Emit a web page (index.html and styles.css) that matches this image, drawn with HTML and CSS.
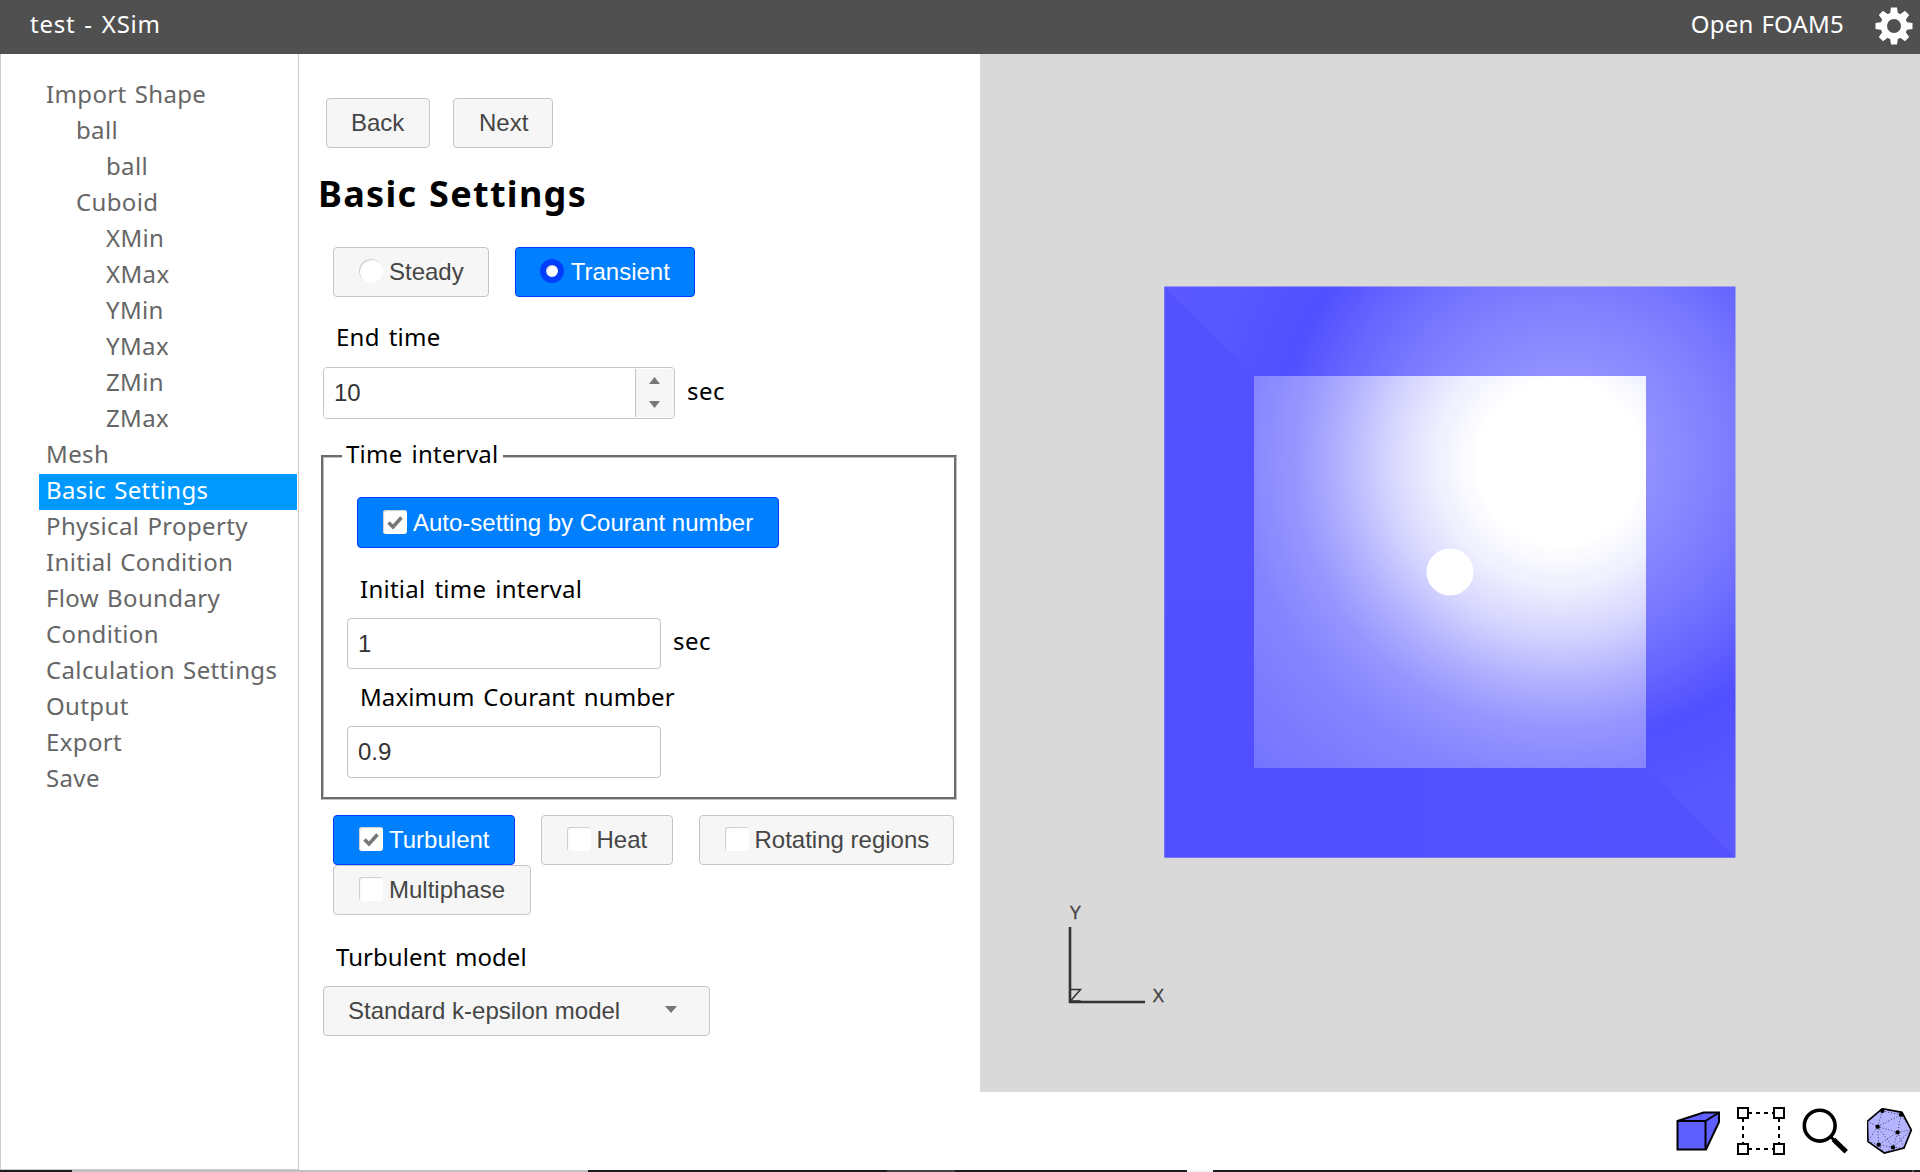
FILE: index.html
```html
<!DOCTYPE html>
<html lang="en">
<head>
<meta charset="utf-8">
<title>test - XSim</title>
<link rel="stylesheet" href="styles.css">
</head>
<body>
<header class="topbar">
  <span class="title">test - XSim</span>
  <span class="solver">Open FOAM5</span>
  <svg class="gear" viewBox="-19 -19 38 38" width="38" height="38">
    <g fill="#fff">
      <path d="M-3-18.5h6l1 7h-8z"/>
      <path d="M-3-18.5h6l1 7h-8z" transform="rotate(45)"/>
      <path d="M-3-18.5h6l1 7h-8z" transform="rotate(90)"/>
      <path d="M-3-18.5h6l1 7h-8z" transform="rotate(135)"/>
      <path d="M-3-18.5h6l1 7h-8z" transform="rotate(180)"/>
      <path d="M-3-18.5h6l1 7h-8z" transform="rotate(225)"/>
      <path d="M-3-18.5h6l1 7h-8z" transform="rotate(270)"/>
      <path d="M-3-18.5h6l1 7h-8z" transform="rotate(315)"/>
    </g>
    <circle r="10.2" fill="none" stroke="#fff" stroke-width="6.4"/>
  </svg>
</header>
<div class="workspace">
  <nav class="sidebar">
    <ul class="tree">
      <li>Import Shape</li>
      <li class="level-1">ball</li>
      <li class="level-2">ball</li>
      <li class="level-1">Cuboid</li>
      <li class="level-2">XMin</li>
      <li class="level-2">XMax</li>
      <li class="level-2">YMin</li>
      <li class="level-2">YMax</li>
      <li class="level-2">ZMin</li>
      <li class="level-2">ZMax</li>
      <li>Mesh</li>
      <li class="selected">Basic Settings</li>
      <li>Physical Property</li>
      <li>Initial Condition</li>
      <li>Flow Boundary</li>
      <li>Condition</li>
      <li>Calculation Settings</li>
      <li>Output</li>
      <li>Export</li>
      <li>Save</li>
    </ul>
  </nav>

  <main class="settings">
    <div class="steps">
      <button class="btn back">Back</button>
      <button class="btn next">Next</button>
    </div>
    <h1>Basic Settings</h1>
    <div class="choices time-mode">
      <button class="btn"><span class="radio"></span>Steady</button>
      <button class="btn active"><span class="radio on"></span>Transient</button>
    </div>

    <label class="caption end-time">End time</label>
    <div class="field">
      <div class="spinner">
        <input class="value" value="10">
        <div class="arrows">
          <svg width="11" height="7"><path d="M0 7L5.500 0 11 7z" fill="#777"/></svg>
          <svg width="11" height="7"><path d="M0 0h11L5.500 7z" fill="#777"/></svg>
        </div>
      </div>
      <span class="unit">sec</span>
    </div>

    <fieldset class="interval">
      <legend>Time interval</legend>
      <button class="btn active auto"><span class="check"><svg width="18" height="18"><path d="M2.500 9.500L7 14l8.500-9.500" fill="none" stroke="#777" stroke-width="3.600"/></svg></span>Auto-setting by Courant number</button>
      <label class="caption initial">Initial time interval</label>
      <div class="field">
        <input class="value box" value="1">
        <span class="unit">sec</span>
      </div>
      <label class="caption courant">Maximum Courant number</label>
      <div class="field">
        <input class="value box tall" value="0.9">
      </div>
    </fieldset>

    <div class="choices physics">
      <button class="btn active"><span class="check"><svg width="18" height="18"><path d="M2.500 9.500L7 14l8.500-9.500" fill="none" stroke="#777" stroke-width="3.600"/></svg></span>Turbulent</button>
      <button class="btn heat"><span class="check"></span>Heat</button>
      <button class="btn"><span class="check"></span>Rotating regions</button>
      <button class="btn multiphase"><span class="check"></span>Multiphase</button>
    </div>

    <label class="caption model">Turbulent model</label>
    <button class="btn select">Standard k-epsilon model
      <svg width="12" height="7"><path d="M0 0h12L6 7z" fill="#777"/></svg>
    </button>
  </main>

  <section class="viewer">
    <svg class="scene" width="940" height="1038" viewBox="980 54 940 1038">
      <defs>
        <radialGradient id="wall" gradientUnits="userSpaceOnUse" cx="1565" cy="455" r="490">
          <stop offset=".17" stop-color="#9291ff"/>
          <stop offset=".35" stop-color="#7c7bff"/>
          <stop offset=".48" stop-color="#6665ff"/>
          <stop offset=".59" stop-color="#514fff"/>
          <stop offset=".74" stop-color="#5957ff"/>
          <stop offset="1" stop-color="#5c5bff"/>
        </radialGradient>
        <radialGradient id="back" gradientUnits="userSpaceOnUse" cx="1560" cy="462" r="455">
          <stop offset=".18" stop-color="#fff"/>
          <stop offset=".27" stop-color="#f0f0ff"/>
          <stop offset=".38" stop-color="#d5d4ff"/>
          <stop offset=".49" stop-color="#b0afff"/>
          <stop offset=".58" stop-color="#9796ff"/>
          <stop offset=".7" stop-color="#8584ff"/>
          <stop offset="1" stop-color="#7170ff"/>
        </radialGradient>
        <linearGradient id="side" x1="0" y1="0" x2="0" y2="1">
          <stop offset="0" stop-color="#5452ff"/>
          <stop offset="1" stop-color="#504eff"/>
        </linearGradient>
        <linearGradient id="floor" x1="0" y1="0" x2="1" y2="0">
          <stop offset="0" stop-color="#504eff"/>
          <stop offset="1" stop-color="#5452ff"/>
        </linearGradient>
      </defs>
      <rect x="1164.500" y="286.500" width="571" height="571" fill="url(#wall)"/>
      <path d="M1164.500 286.500L1254 376V768l-89.500 89.500z" fill="url(#side)"/>
      <path d="M1164.500 857.500L1254 768H1646l89.500 89.500z" fill="url(#floor)"/>
      <rect x="1254" y="376" width="392" height="392" fill="url(#back)"/>
      <circle cx="1450" cy="572" r="23.500" fill="#fff"/>
      <path d="M1070 927v75h75" fill="none" stroke="#333" stroke-width="2.600"/>
      <path d="M1070.500 989.500h10l-10 11.500h10" fill="none" stroke="#333" stroke-width="1.500"/>
      <g class="axis">
        <text x="1069.500" y="919">Y</text>
        <text x="1152.500" y="1001.500">X</text>
      </g>
    </svg>
    <div class="tools">
      <svg class="cube" width="46" height="42" viewBox="1675 1110 46 42">
        <path d="M1677.500 1121l26-8.500h15.500v9.500l-13 27.500h-28.500z" fill="#5f5fff" stroke="#000" stroke-width="2"/>
        <path d="M1677.500 1121h28v28.500M1705.500 1121l13.500-8.500" fill="none" stroke="#000" stroke-width="2"/>
      </svg>
      <svg width="48" height="48" viewBox="1737 1107 48 48">
        <path d="M1748 1113h26M1748 1149h26M1743 1118v26M1779 1118v26" stroke="#000" stroke-width="2" stroke-dasharray="4 4" fill="none"/>
        <path d="M1738 1108h10v10h-10zM1774 1108h10v10h-10zM1738 1144h10v10h-10zM1774 1144h10v10h-10z" fill="#fff" stroke="#000" stroke-width="2"/>
      </svg>
      <svg width="46" height="46" viewBox="1802 1108 46 46">
        <circle cx="1819.700" cy="1125.700" r="15.400" fill="none" stroke="#000" stroke-width="3.600"/>
        <path d="M1831 1137l4 4" stroke="#000" stroke-width="3"/>
        <path d="M1833.500 1139.500l12.700 12.200" stroke="#000" stroke-width="5"/>
      </svg>
      <svg class="mesh" width="46" height="48" viewBox="620 84 138 144">
        <path d="M666 86l59 11 28 53-22 54-59 15-49-34-2-61z" fill="#b3b3ff" stroke="#000" stroke-width="5"/>
        <path d="M666 93l-14 47 3 54 43 8 14-45 10-53-70 36 60 17-57 37-32-10 29-44-31-16M652 140l46 62M712 157l41-7-55 52 33 2M655 194l17 25 26-17M712 157l19 47M666 93l56 11 31 46" fill="none" stroke="#223" stroke-width="2.500" stroke-dasharray="3 6"/>
        <g fill="#000"><circle cx="666" cy="93" r="6.500"/><circle cx="722" cy="104" r="6.500"/><circle cx="652" cy="140" r="6.500"/><circle cx="712" cy="157" r="6.500"/><circle cx="655" cy="194" r="6.500"/><circle cx="698" cy="202" r="6.500"/></g>
      </svg>
    </div>
  </section>
</div>
<footer class="edge"></footer>
</body>
</html>
```
FILE: styles.css
```css
* { box-sizing: border-box; }

body {
  margin: 0;
  height: 1172px;
  display: flex;
  flex-direction: column;
  overflow: hidden;
  background: #fff;
  color: #000;
  font: 24px/32px "Noto Sans", sans-serif;
}

.topbar {
  height: 54px;
  flex: none;
  display: flex;
  align-items: center;
  padding: 0 7px 6px 30px;
  background: #505050;
  color: #fff;
}
.title { flex: 1; letter-spacing: .75px; word-spacing: 2px; }
.solver { letter-spacing: .2px; word-spacing: 1.5px; }
.gear { margin: 4px 0 0 31px; }

.workspace {
  flex: 1;
  min-height: 0;
  display: grid;
  grid-template-columns: 299px 681px 940px;
}

.sidebar {
  border: 1px solid #ccc;
  border-top: 0;
  padding: 24px 1px 0 38px;
}
.tree {
  margin: 0;
  padding: 0;
  list-style: none;
  color: #666;
  letter-spacing: .36px;
  word-spacing: 1.5px;
}
.tree li {
  height: 36px;
  line-height: 32px;
  padding-left: 7px;
  white-space: nowrap;
}
.tree .level-1 { padding-left: 37px; }
.tree .level-2 { padding-left: 67px; }
.tree .selected { background: #0099ff; color: #fff; }

.settings { padding: 44px 0 0 24px; }
.settings h1 {
  margin: 18px 0 0 -5px;
  font-size: 36px;
  line-height: 56px;
  letter-spacing: 1.3px;
  word-spacing: 1px;
}

.btn {
  height: 50px;
  display: inline-flex;
  align-items: center;
  padding: 0 24px;
  border: 1px solid #c5c5c5;
  border-radius: 4px;
  background: #f6f6f6;
  color: #454545;
  font: 24px "Liberation Sans", Arial, sans-serif;
  white-space: nowrap;
}
.btn.active { background: #007fff; border-color: #003eff; color: #fff; }
.back { width: 104px; }
.next { width: 100px; padding-left: 25px; }
.heat { width: 132px; }
.multiphase { width: 198px; }

.steps { display: flex; gap: 23px; margin-left: 3px; }
.choices { display: flex; flex-wrap: wrap; column-gap: 26px; margin-left: 10px; }
.time-mode { margin-top: 25px; }
.physics { margin-top: 15px; }

.radio, .check {
  width: 24px;
  height: 24px;
  margin: -2px 6px 0 1px;
  background: #fff;
  box-shadow: inset 1px 1px 1px #ccc;
  border-radius: 3px;
  display: flex;
  align-items: center;
  justify-content: center;
}
.radio { border-radius: 50%; }
.radio.on { margin: -2px 7px 0 0; border: 6px solid #003eff; }

.caption {
  display: block;
  height: 32px;
  margin-left: 13px;
  letter-spacing: .25px;
  word-spacing: 2.5px;
}
.end-time { margin-top: 24px; margin-bottom: 14px; }
.initial { margin-top: 25px; margin-bottom: 13px; }
.courant { margin-top: 12px; margin-bottom: 13px; letter-spacing: .1px; }
.model { margin-top: 26px; margin-bottom: 13px; letter-spacing: .05px; }

.field { display: flex; align-items: center; gap: 12px; }
.unit { margin-top: -5px; letter-spacing: .5px; }
.spinner {
  width: 352px;
  height: 52px;
  display: flex;
  border: 1px solid #c5c5c5;
  border-radius: 4px;
  overflow: hidden;
}
.value {
  flex: 1;
  min-width: 0;
  padding: 0 10px;
  border: 0;
  color: #333;
  background: #fff;
  font: 24px "Liberation Sans", Arial, sans-serif;
}
.arrows {
  width: 39px;
  margin: 1px 0;
  padding: 0 2px 1px 0;
  display: flex;
  flex-direction: column;
  align-items: center;
  justify-content: center;
  gap: 17px;
  border-left: 1px solid #c5c5c5;
  background: #f6f6f6;
}
.box {
  flex: none;
  width: 314px;
  height: 51px;
  border: 1px solid #c5c5c5;
  border-radius: 4px;
}
.box.tall { height: 52px; }

.interval {
  width: 636px;
  margin: 19px 0 0 -2px;
  padding: 22px 23px 19px;
  border: 3px groove #c0c0c0;
}
.interval legend {
  height: 37px;
  margin-left: -5px;
  padding: 0 4px 6px;
  line-height: 31px;
  letter-spacing: .25px;
  word-spacing: 2.5px;
}
.auto { width: 422px; height: 51px; margin-left: 10px; vertical-align: top; }

.select {
  width: 387px;
  justify-content: space-between;
  padding-right: 32px;
}
.select svg { margin-top: -3px; }

.viewer { display: flex; flex-direction: column; }
.scene { display: block; background: #d9d9d9; }
.axis text { font: 17.5px "Liberation Sans", Arial, sans-serif; fill: #444; stroke: #444; stroke-width: .3px; }
.tools {
  display: flex;
  align-items: center;
  justify-content: flex-end;
  gap: 17px;
  padding: 14px 7px 0 0;
}
.cube { margin-right: -1px; }
.mesh { margin: 2px 0 0 2px; }

.edge {
  flex: none;
  height: 2px;
  background: linear-gradient(to right,
    #1c1c1e 72px, #c0c0c0 72px 588px, #1c1c1e 588px 887px, #444 887px 955px,
    #1c1c1e 955px 1187px, #f4f4f4 1187px 1213px, #1c1c1e 1213px 1912px, #555 1912px 1914px, #1c1c1e 1914px);
}
```
